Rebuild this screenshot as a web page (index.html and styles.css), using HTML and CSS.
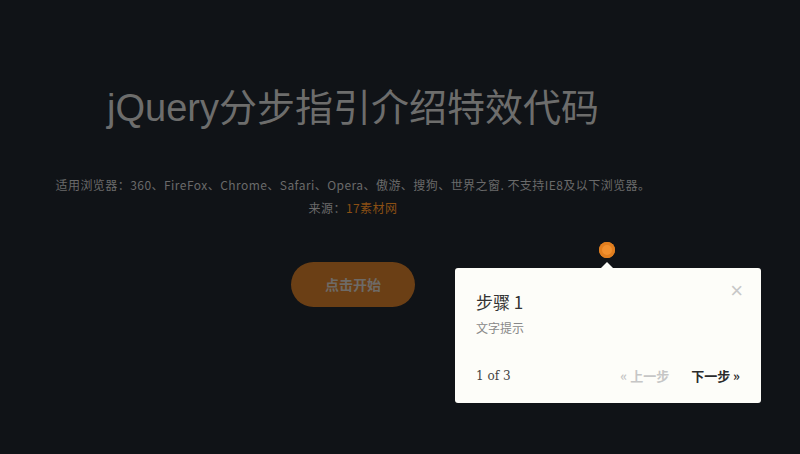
FILE: index.html
```html
<!DOCTYPE html>
<html lang="zh-CN">
<head>
    <meta charset="UTF-8">
    <title>jQuery分步指引介绍特效代码</title>
    <link rel="stylesheet" href="styles.css">
</head>
<body>
    <div class="wrap">
        <h1>jQuery分步指引介绍特效代码</h1>
        <p class="info">适用浏览器：360、FireFox、Chrome、Safari、Opera、傲游、搜狗、世界之窗. 不支持IE8及以下浏览器。</p>
        <p class="info">来源：<a href="#">17素材网</a></p>
        <div class="start">
            <span class="btn-start">点击开始</span>
        </div>
    </div>

    <div class="dot"></div>
    <div class="bubble">
        <span class="close">&times;</span>
        <h3>步骤 1</h3>
        <div class="tip">文字提示</div>
        <div class="bubble-foot">
            <span class="count">1 of 3</span>
            <span class="nav">
                <span class="prev">&laquo; 上一步</span>
                <span class="next">下一步 &raquo;</span>
            </span>
        </div>
    </div>
</body>
</html>
```

FILE: styles.css
```css
html, body {
    padding:0px;
    margin:0px;
    background: #101317;
    font-family: "Liberation Sans", "Noto Sans CJK SC", sans-serif;
    height:100%;
    overflow:hidden;
}

.wrap {
    width:706px;
    padding-top:83px;
    text-align:center;
}

h1 {
    margin:0px;
    font-size:38px;
    font-weight:normal;
    color: #6d6d6c;
    line-height:50px;
}

.info {
    margin:0px;
    font-family: "Noto Sans CJK SC", sans-serif;
    font-size:12px;
    letter-spacing:0.45px;
    color: #6a6a6a;
    line-height:23px;
}

.info:first-of-type {
    margin-top:40px;
}

.info a {
    color: #8a4f14;
    text-decoration:none;
}

.start {
    margin-top:43px;
}

.btn-start {
    display:inline-block;
    width:124px;
    height:45px;
    line-height:45px;
    border-radius:23px;
    background: #6b3f15;
    color: #6e6a66;
    font-family: "Noto Sans CJK SC", sans-serif;
    font-size:14px;
    font-weight:bold;
}

.dot {
    position:absolute;
    left:599px;
    top:242px;
    width:16px;
    height:16px;
    border-radius:50%;
    background: #f2902e;
    box-shadow: inset 0 0 0 3px #e27e1e;
}

.bubble {
    position:absolute;
    left:455px;
    top:268px;
    width:306px;
    height:135px;
    box-sizing:border-box;
    padding:22px 21px 0 21px;
    background: #fdfdf9;
    border-radius:3px;
    font-family: "Noto Sans CJK SC", sans-serif;
}

.bubble:before {
    content:'';
    position:absolute;
    left:146px;
    top:-6px;
    border-left:6px solid transparent;
    border-right:6px solid transparent;
    border-bottom:6px solid #fdfdf9;
}

.bubble h3 {
    margin:0px;
    font-size:17px;
    font-weight:normal;
    color: #333;
    line-height:24px;
}

.tip {
    margin-top:6px;
    font-size:12px;
    color: #888;
    line-height:16px;
}

.close {
    position:absolute;
    right:18px;
    top:11px;
    font-family: "Liberation Sans", sans-serif;
    font-size:22px;
    color: #c8c8c8;
    line-height:24px;
}

.bubble-foot {
    display:flex;
    justify-content:space-between;
    align-items:center;
    margin-top:30px;
    font-size:13px;
}

.count {
    font-family: Georgia, "DejaVu Serif", serif;
    color: #444;
    font-size:12px;
}

.nav {
    display:flex;
    gap:22px;
}

.prev {
    color: #c6c6c6;
    font-weight:bold;
}

.next {
    color: #2b2b2b;
    font-weight:bold;
}
```
